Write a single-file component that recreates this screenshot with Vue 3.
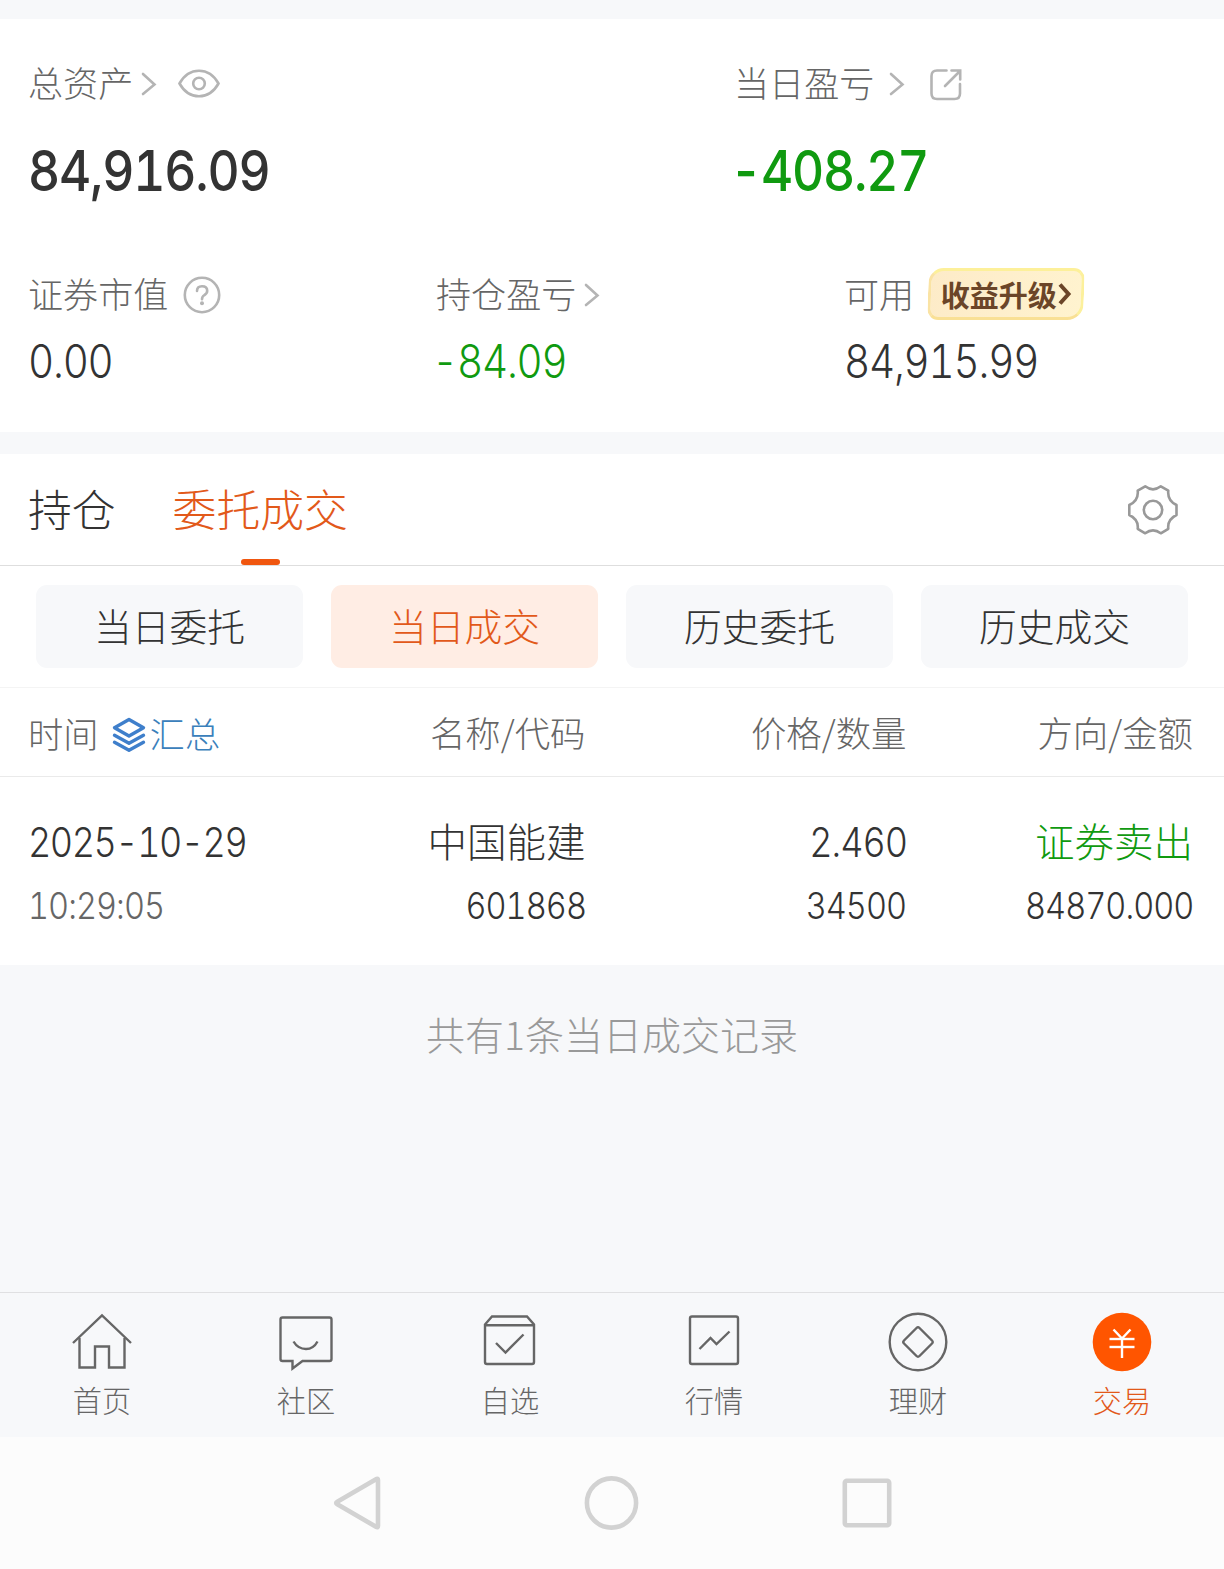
<template>
  <div class="page">
    <section class="assets">
      <div class="summary">
        <div class="cell">
          <div class="label">
            <span>总资产</span>
            <svg class="arrow" width="16" height="24" viewBox="0 0 16 24"><path d="M2 2 L13.5 12.5 L2 22" /></svg>
            <svg class="eye" width="44" height="32" viewBox="0 0 44 32">
              <path d="M2.5 15.5 C12 -1.5 32 -1.5 41.5 15.5 C32 32.5 12 32.5 2.5 15.5 Z" />
              <circle cx="22" cy="15.5" r="5.8" />
            </svg>
          </div>
          <div class="big"><span class="num">84,916.09</span></div>
        </div>
        <div class="cell">
          <div class="label">
            <span>当日盈亏</span>
            <svg class="arrow wide" width="16" height="24" viewBox="0 0 16 24"><path d="M2 2 L13.5 12.5 L2 22" /></svg>
            <svg class="share" width="34" height="34" viewBox="0 0 34 34">
              <path d="M17.5 2.5 H8 Q2.5 2.5 2.5 8 V25.5 Q2.5 31 8 31 H25.5 Q31 31 31 25.5 V16" />
              <path d="M16 18 L31 3 M22.5 2.5 H31.2 V11.5" />
            </svg>
          </div>
          <div class="big green"><span class="num">-408.27</span></div>
        </div>
      </div>

      <div class="details">
        <div class="cell">
          <div class="label">
            <span>证券市值</span>
            <svg class="help" width="38" height="38" viewBox="0 0 38 38">
              <circle cx="19" cy="19" r="17.2" />
              <path d="M14 15 Q14 10.3 19 10.3 Q24.2 10.3 24.2 14.8 Q24.2 17.5 21.5 19 Q19 20.5 19 23.3" />
              <circle class="dot" cx="19" cy="27.3" r="2" />
            </svg>
          </div>
          <div class="mid"><span class="num">0.00</span></div>
        </div>
        <div class="cell">
          <div class="label">
            <span>持仓盈亏</span>
            <svg class="arrow" width="16" height="24" viewBox="0 0 16 24"><path d="M2 2 L13.5 12.5 L2 22" /></svg>
          </div>
          <div class="mid green"><span class="num">-84.09</span></div>
        </div>
        <div class="cell">
          <div class="label">
            <span>可用</span>
            <div class="upgrade">
              收益升级
              <svg width="14" height="24" viewBox="0 0 14 24"><path d="M2 2.5 L10.5 12 L2 21.5" /></svg>
            </div>
          </div>
          <div class="mid"><span class="num">84,915.99</span></div>
        </div>
      </div>
    </section>

    <section class="orders">
      <div class="tabs">
        <span
          v-for="t in tabs"
          :key="t"
          class="tab"
          :class="{ active: t === activeTab }"
          @click="activeTab = t"
        >{{ t }}</span>
        <svg class="gear" width="52" height="52" viewBox="0 0 52 52">
          <path d="M18.2 2.3 Q26 8.3 33.8 2.3 L41.3 6.7 Q40.2 16.5 49.5 21 V31 Q40.2 35.5 41.3 44.8 L33.8 49.3 Q26 43.3 18.2 49.3 L10.7 44.8 Q11.8 35.5 2.3 31 V21 Q11.8 16.5 10.7 6.7 Z" />
          <circle cx="26" cy="26" r="9.2" />
        </svg>
      </div>

      <div class="filters">
        <button
          v-for="f in filters"
          :key="f"
          class="filter"
          :class="{ active: f === activeFilter }"
          @click="activeFilter = f"
        >{{ f }}</button>
      </div>

      <div class="row head">
        <div class="time-head">
          <span>时间</span>
          <svg width="34" height="36" viewBox="0 0 34 36">
            <path d="M17 2.5 L31.5 10.7 L17 19 L2.5 10.7 Z" />
            <path d="M2.5 18.3 L17 26.3 L31.5 18.3" />
            <path d="M2.5 25.3 L17 33.3 L31.5 25.3" />
          </svg>
          <span class="sum">汇总</span>
        </div>
        <div>名称/代码</div>
        <div>价格/数量</div>
        <div>方向/金额</div>
      </div>

      <div v-for="r in records" :key="r.code" class="record">
        <div class="row first">
          <div><span class="num date">{{ r.date }}</span></div>
          <div>{{ r.name }}</div>
          <div><span class="num">{{ r.price }}</span></div>
          <div class="green">{{ r.side }}</div>
        </div>
        <div class="row second">
          <div class="time"><span class="num">{{ r.time }}</span></div>
          <div><span class="num">{{ r.code }}</span></div>
          <div><span class="num">{{ r.qty }}</span></div>
          <div><span class="num">{{ r.amount }}</span></div>
        </div>
      </div>
    </section>

    <div class="total">共有{{ records.length }}条当日成交记录</div>

    <nav class="navbar">
      <div v-for="n in navs" :key="n.label" class="nav-item" :class="{ active: n.active }">
        <svg width="62" height="62" viewBox="0 0 62 62">
          <circle v-if="n.active" class="disc" cx="31" cy="31" r="29.3" />
          <path v-for="d in n.paths" :key="d" :d="d" />
        </svg>
        <span>{{ n.label }}</span>
      </div>
    </nav>

    <div class="system">
      <svg width="56" height="56" viewBox="0 0 56 56"><path d="M47 4.2 Q49 3 49 5.3 V50.7 Q49 53 47 51.8 L8.3 29.3 Q6 28 8.3 26.7 Z" /></svg>
      <svg width="56" height="56" viewBox="0 0 56 56"><circle cx="27.5" cy="28" r="24.6" /></svg>
      <svg width="56" height="56" viewBox="0 0 56 56"><rect x="5.8" y="5.8" width="44.4" height="44.4" rx="2" /></svg>
    </div>
  </div>
</template>

<script setup>
import { ref } from 'vue';

const tabs = ['持仓', '委托成交'];
const activeTab = ref('委托成交');

const filters = ['当日委托', '当日成交', '历史委托', '历史成交'];
const activeFilter = ref('当日成交');

const records = ref([
  {
    date: '2025-10-29',
    time: '10:29:05',
    name: '中国能建',
    code: '601868',
    price: '2.460',
    qty: '34500',
    side: '证券卖出',
    amount: '84870.000'
  }
]);

const navs = [
  {
    label: '首页',
    paths: ['M2 32 L31 4.5 L60 32', 'M8.5 27 V56.5 H24 V35.5 H38 V56.5 H53.5 V27']
  },
  {
    label: '社区',
    paths: [
      'M7.5 6.5 H54.5 Q56.5 6.5 56.5 8.5 V48 Q56.5 50 54.5 50 H27.5 L17.5 57.5 V50 H7.5 Q5.5 50 5.5 48 V8.5 Q5.5 6.5 7.5 6.5 Z',
      'M18.5 30.5 Q23 38 31 38 Q38.5 38 42.5 30.5'
    ]
  },
  {
    label: '自选',
    paths: [
      'M6 13.5 L13 5.5 H48 L55 13.5 V51 Q55 53 53 53 H8 Q6 53 6 51 Z',
      'M6 14.2 H55',
      'M17 32 L26.5 41.5 L44.5 23.5'
    ]
  },
  {
    label: '行情',
    paths: [
      'M9 5.5 H53 Q55 5.5 55 7.5 V51 Q55 53 53 53 H9 Q7 53 7 51 V7.5 Q7 5.5 9 5.5 Z',
      'M16.5 38 L27.5 27 L33.5 33 L46.5 20.5'
    ]
  },
  {
    label: '理财',
    paths: [
      'M31 2.7 A28.3 28.3 0 1 1 31 59.3 A28.3 28.3 0 1 1 31 2.7 Z',
      'M32.5 17 L45 29.5 Q46.5 31 45 32.5 L32.5 45 Q31 46.5 29.5 45 L17 32.5 Q15.5 31 17 29.5 L29.5 17 Q31 15.5 32.5 17 Z'
    ]
  },
  {
    label: '交易',
    active: true,
    paths: ['M22.5 18.5 L31 27.5 L39.5 18.5', 'M18.5 28 H43.5', 'M18.5 36 H43.5', 'M31 27.5 V47']
  }
];
</script>

<style>
body { background: #f7f8fa; }
</style>

<style scoped>
.page {
  width: 1224px; height: 1569px; overflow: hidden;
  display: flex; flex-direction: column;
  background: #f7f8fa; color: #333;
  font-family: "Noto Sans CJK SC", sans-serif; font-weight: 300;
}
svg { fill: none; flex-shrink: 0; }
.num {
  display: inline-block; white-space: nowrap;
  font-family: Inter, "Noto Sans CJK SC", sans-serif;
  font-variant-numeric: tabular-nums; letter-spacing: -0.03em;
  transform: scaleX(0.88); transform-origin: left center;
}
.green { color: #109a10; }

.assets { height: 413px; margin-top: 19px; padding: 0 28px; background: #fff; box-sizing: border-box; }
.summary { display: grid; grid-template-columns: 706px 1fr; padding-top: 37px; }
.details { display: grid; grid-template-columns: 408px 408px 1fr; padding-top: 66px; }
.label { height: 52px; display: flex; align-items: center; font-size: 35.1px; line-height: 52px; color: #666; }
.label svg { stroke: #b4b4b4; stroke-width: 2.6; stroke-linecap: round; }
.arrow { margin-left: 8px; margin-top: 3px; }
.arrow.wide { margin-left: 15px; }
.eye { margin-left: 20px; margin-top: 3px; }
.share { margin-left: 24px; margin-top: 5px; }
.help { margin-left: 15px; margin-top: 4px; }
.help .dot { fill: #b4b4b4; stroke: none; }
.big { height: 70px; margin-top: 23px; font-size: 56.5px; line-height: 70px; font-weight: 450; }
.big .num { letter-spacing: -0.024em; }
.mid { height: 60px; margin-top: 9px; font-size: 46px; line-height: 60px; }
.big.green .num, .mid.green .num { margin-left: -4px; }

.upgrade {
  position: relative; z-index: 0;
  display: flex; align-items: center; justify-content: center;
  width: 158px; height: 52px; margin-left: 13px; margin-top: 2px;
  color: #6b4528; font-size: 29px; font-weight: 700;
}
.upgrade::before {
  content: ''; position: absolute; z-index: -1; inset: 0 1px;
  border: 3px solid #fbe596; border-color: #fdf09a #fcf09c #f9e095 #fae3a4;
  border-radius: 15px 11px 16px 11px; transform: skewX(-2deg);
  background: linear-gradient(100deg, #fdebc8, #fff3cf);
}
.upgrade svg { margin-left: 1px; stroke: #6b4528; stroke-width: 4; stroke-linecap: butt; }

.orders { height: 511px; margin-top: 22px; background: #fff; }
.tabs {
  height: 112px; box-sizing: border-box; padding: 0 45px 0 28px;
  display: flex; align-items: center; border-bottom: 1px solid #dedede;
}
.tab { position: relative; margin-right: 57px; font-size: 43.8px; line-height: 109px; height: 112px; }
.tab.active { color: #e2591a; }
.tab.active::after {
  content: ''; position: absolute; left: 50%; bottom: 1px;
  width: 39px; height: 6px; margin-left: -19.5px; border-radius: 3px; background: #f0560f;
}
.gear { margin-left: auto; stroke: #999; stroke-width: 2.6; stroke-linejoin: round; }

.filters { display: grid; grid-template-columns: repeat(4, 267px); gap: 28px; padding: 19px 36px; border-bottom: 1px solid #f4f4f4; }
.filter {
  height: 83px; padding: 0 0 3px; border: 0; border-radius: 11px;
  background: #f7f8fa; color: #333; font-family: inherit; font-weight: 300; font-size: 37.8px; line-height: 80px;
}
.filter.active { background: #ffede4; color: #e2591a; }

.row { display: grid; grid-template-columns: 236px 321.5px 321px 286.5px; padding-left: 28px; text-align: right; }
.row > :first-child { text-align: left; }
.row .num { transform-origin: right center; }
.row > :first-child .num { transform-origin: left center; }
.head { height: 88px; line-height: 87px; font-size: 35.4px; color: #666; border-bottom: 1px solid #eaeaea; }
.time-head { display: flex; align-items: center; white-space: nowrap; font-size: 35.3px; }
.time-head svg { margin-left: 13px; margin-top: 5px; stroke: #3f7fcb; stroke-width: 3.4; stroke-linejoin: round; stroke-linecap: round; }
.sum { margin-left: 4px; color: #3a80bb; }
.record { padding-top: 31px; }
.first { height: 65px; line-height: 64px; font-size: 39.5px; }
.first .num { font-size: 41px; }
.first .date { letter-spacing: -0.042em; }
.second { height: 60px; line-height: 60px; font-size: 37px; }
.time { color: #666; }

.total { margin-top: 38px; height: 60px; text-align: center; font-size: 39px; line-height: 60px; color: #999; }

.navbar {
  height: 145px; box-sizing: border-box; margin-top: auto;
  display: grid; grid-template-columns: repeat(6, 204px);
  border-top: 1px solid #e0e0e2; background: #f7f8fa;
}
.nav-item { display: flex; flex-direction: column; align-items: center; padding-top: 18px; font-size: 29.2px; line-height: 42px; color: #666; }
.nav-item svg { stroke: #666; stroke-width: 2.4; }
.nav-item span { margin-top: 5px; }
.nav-item.active { color: #e2591a; }
.nav-item.active svg { stroke: #fff; }
.nav-item .disc { fill: #ff5500; stroke: none; }

.system { height: 132px; display: flex; justify-content: center; gap: 199px; align-items: center; background: #fcfcfc; }
.system svg { stroke: #d2d2d2; stroke-width: 4.6; }
</style>
